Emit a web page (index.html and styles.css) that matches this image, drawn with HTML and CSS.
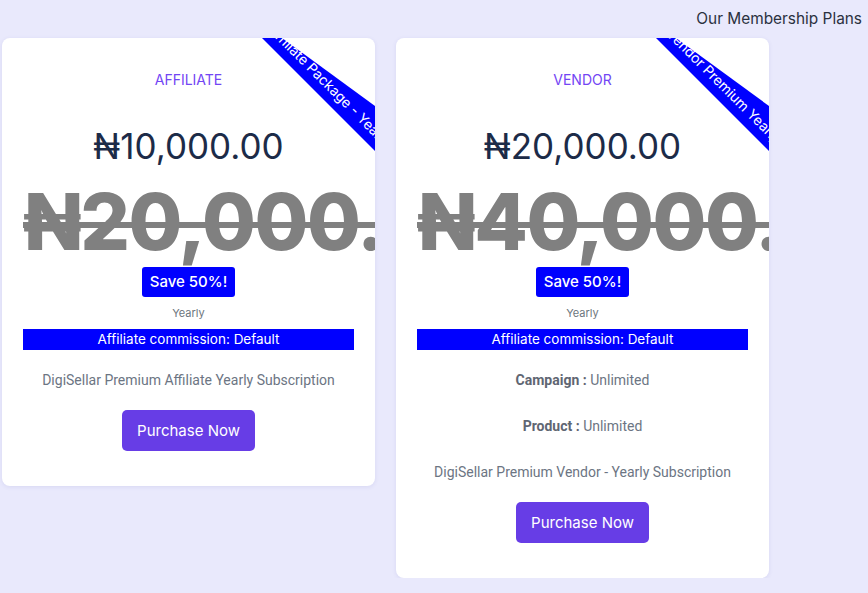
FILE: index.html
```html
<!DOCTYPE html>
<html lang="en">
<head>
<meta charset="utf-8">
<title>Our Membership Plans</title>
<link rel="stylesheet" href="styles.css">
</head>
<body>
<header class="page-title">Our Membership Plans</header>
<main class="plans">
  <section class="card">
    <div class="ribbon-band"></div>
    <span class="ribbon-text">Affiliate Package - Yearly</span>
    <h3 class="plan-name">AFFILIATE</h3>
    <div class="price">₦10,000.00</div>
    <div class="old-price">₦20,000.00</div>
    <div class="save">Save 50%!</div>
    <div class="period">Yearly</div>
    <div class="commission">Affiliate commission: Default</div>
    <p class="desc">DigiSellar Premium Affiliate Yearly Subscription</p>
    <a class="buy" href="#">Purchase Now</a>
  </section>
  <section class="card">
    <div class="ribbon-band"></div>
    <span class="ribbon-text">Vendor Premium Yearly</span>
    <h3 class="plan-name">VENDOR</h3>
    <div class="price">₦20,000.00</div>
    <div class="old-price">₦40,000.00</div>
    <div class="save">Save 50%!</div>
    <div class="period">Yearly</div>
    <div class="commission">Affiliate commission: Default</div>
    <p class="feature"><b>Campaign :</b> Unlimited</p>
    <p class="feature"><b>Product :</b> Unlimited</p>
    <p class="desc">DigiSellar Premium Vendor - Yearly Subscription</p>
    <a class="buy" href="#">Purchase Now</a>
  </section>
</main>
</body>
</html>
```
FILE: styles.css
```css
* { box-sizing: border-box; }
body {
  margin: 0;
  background: #e9e9fc;
  font-family: Inter, Roboto, "DejaVu Sans", sans-serif;
  color: #2b3140;
}
.page-title {
  height: 38px;
  padding: 9px 6px 0 0;
  text-align: right;
  font-size: 15.4px;
  line-height: 20px;
  color: #2b3140;
}
.plans {
  display: flex;
  align-items: flex-start;
  gap: 21px;
  padding-left: 2px;
}
.card {
  position: relative;
  overflow: hidden;
  width: 373px;
  background: #fff;
  border-radius: 8px;
  box-shadow: 0 1px 4px rgba(90, 90, 170, 0.12);
  padding: 31px 21px 35px;
  text-align: center;
  display: flex;
  flex-direction: column;
  align-items: center;
}
.ribbon-band {
  position: absolute;
  top: 0;
  right: 0;
  width: 113px;
  height: 113px;
  background: #0000ff;
  clip-path: polygon(0 0, 20px 0, 113px 68px, 113px 113px);
}
.ribbon-text {
  position: absolute;
  top: 38px;
  right: -55px;
  width: 200px;
  height: 20px;
  line-height: 20px;
  font-size: 14px;
  color: #fff;
  text-align: center;
  white-space: nowrap;
  transform: rotate(45deg);
}
.plan-name {
  margin: 0;
  font-size: 14px;
  font-weight: 400;
  line-height: 21px;
  color: #7246f4;
}
.price {
  margin-top: 36px;
  font-size: 35px;
  line-height: 40px;
  color: #1c2b48;
}
.old-price {
  align-self: stretch;
  margin-top: 16px;
  font-size: 78px;
  font-weight: 800;
  line-height: 80px;
  color: #808080;
  text-align: left;
  white-space: nowrap;
  text-decoration: line-through;
  text-decoration-thickness: 6px;
  letter-spacing: -1.5px;
}
.save {
  margin-top: 5px;
  width: 93px;
  height: 30px;
  line-height: 30px;
  background: #0000ff;
  color: #fff;
  font-size: 15px;
  font-weight: 500;
  border-radius: 3px;
}
.period {
  margin-top: 8px;
  font-size: 11px;
  line-height: 16px;
  color: #6c757d;
}
.commission {
  align-self: stretch;
  margin-top: 8px;
  height: 21px;
  line-height: 21px;
  background: #0000ff;
  color: #fff;
  font-size: 13.5px;
}
.feature, .desc {
  margin: 20px 0 0;
  font-family: Roboto, "Noto Sans", sans-serif;
  font-size: 14px;
  line-height: 21px;
  color: #6c7583;
}
.feature + .feature, .feature + .desc { margin-top: 25px; }
.feature b { font-weight: 700; color: #5f6672; }
.buy {
  margin-top: 19px;
  width: 133px;
  height: 41px;
  line-height: 41px;
  background: #673de6;
  color: #fff;
  font-size: 15px;
  text-decoration: none;
  border-radius: 5px;
}
```
